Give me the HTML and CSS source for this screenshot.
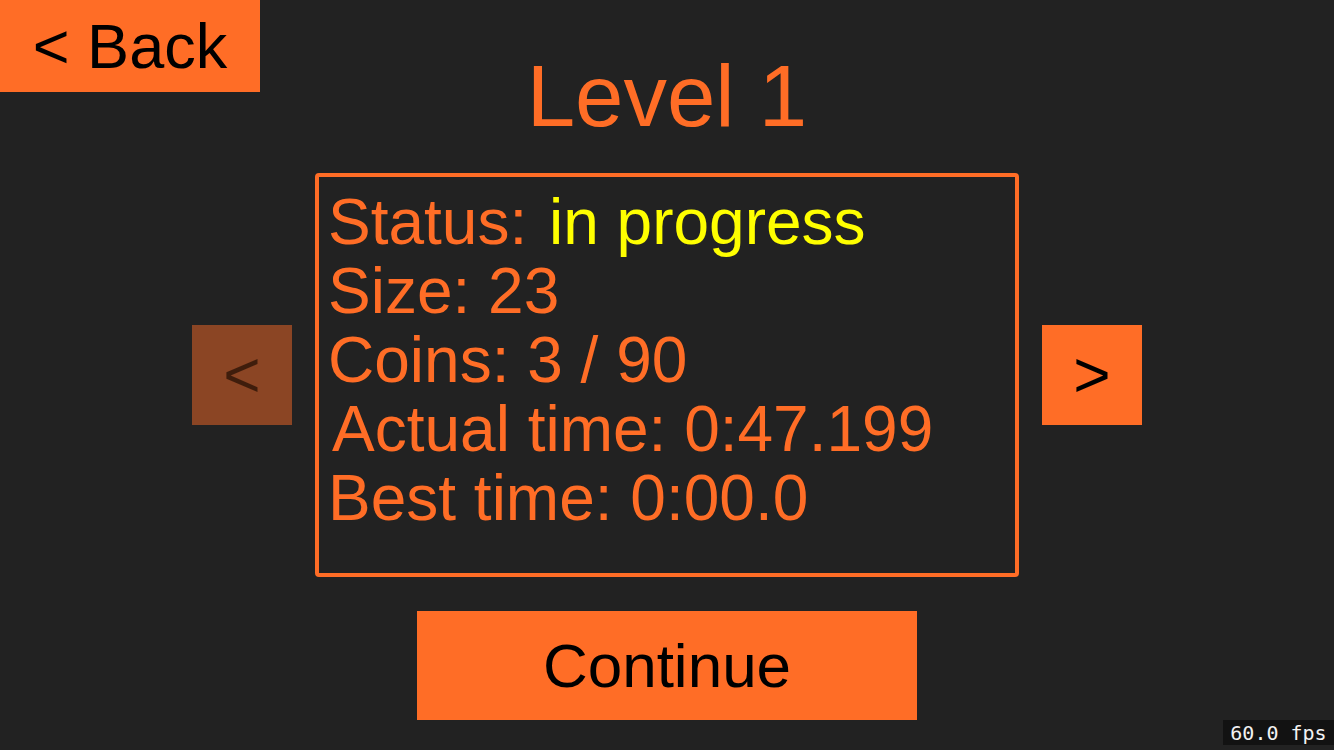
FILE: index.html
```html
<!DOCTYPE html>
<html>
<head>
<meta charset="utf-8">
<link rel="stylesheet" href="styles.css">
</head>
<body>
<div class="page">
  <h1 class="title">Level 1</h1>
  <div class="row">
    <div class="arrow arrow-disabled">&lt;</div>
    <div class="info">
      <div class="line">Status: <span class="status">in progress</span></div>
      <div class="line">Size: 23</div>
      <div class="line">Coins: 3 / 90</div>
      <div class="line line-actual">Actual time: 0:47.199</div>
      <div class="line">Best time: 0:00.0</div>
    </div>
    <div class="arrow">&gt;</div>
  </div>
  <div class="continue">Continue</div>
</div>
<div class="back">&lt; Back</div>
<div class="fps">60.0 fps</div>
</body>
</html>
```
FILE: styles.css
```css
html, body {
  margin: 0;
  padding: 0;
}
body {
  width: 1334px;
  height: 750px;
  background: #222222;
  font-family: "Liberation Sans", Arial, sans-serif;
  position: relative;
  overflow: hidden;
}
.page {
  display: flex;
  flex-direction: column;
  align-items: center;
}
.title {
  margin: 0;
  padding-top: 52px;
  font-size: 87px;
  line-height: 87px;
  font-weight: normal;
  color: #ff6d26;
}
.row {
  display: flex;
  align-items: center;
  gap: 23px;
  margin-top: 34px;
}
.arrow {
  width: 100px;
  height: 100px;
  display: flex;
  align-items: center;
  justify-content: center;
  background: #ff6d26;
  color: #000;
  font-size: 64px;
  line-height: 1;
}
.arrow-disabled {
  background: #8b4524;
  color: #3f1d0c;
}
.info {
  width: 704px;
  height: 404px;
  box-sizing: border-box;
  border: 4px solid #ff6d26;
  border-radius: 4px;
  padding: 11px 0 0 9px;
  font-size: 64px;
  line-height: 69px;
  color: #ff6d26;
}
.line-actual {
  padding-left: 4px;
}
.status {
  color: #ffff00;
  margin-left: 4px;
}
.continue {
  margin-top: 34px;
  width: 500px;
  height: 109px;
  display: flex;
  align-items: center;
  justify-content: center;
  background: #ff6d26;
  color: #000;
  font-size: 62px;
}
.back {
  position: absolute;
  top: 0;
  left: 0;
  width: 260px;
  height: 92px;
  display: flex;
  align-items: center;
  justify-content: center;
  background: #ff6d26;
  color: #000;
  font-size: 63px;
}
.fps {
  position: absolute;
  right: 0;
  bottom: 5px;
  width: 111px;
  height: 25px;
  display: flex;
  align-items: center;
  justify-content: center;
  background: #121212;
  color: #f2f2f2;
  font-family: "DejaVu Sans Mono", monospace;
  font-size: 20px;
}
```
